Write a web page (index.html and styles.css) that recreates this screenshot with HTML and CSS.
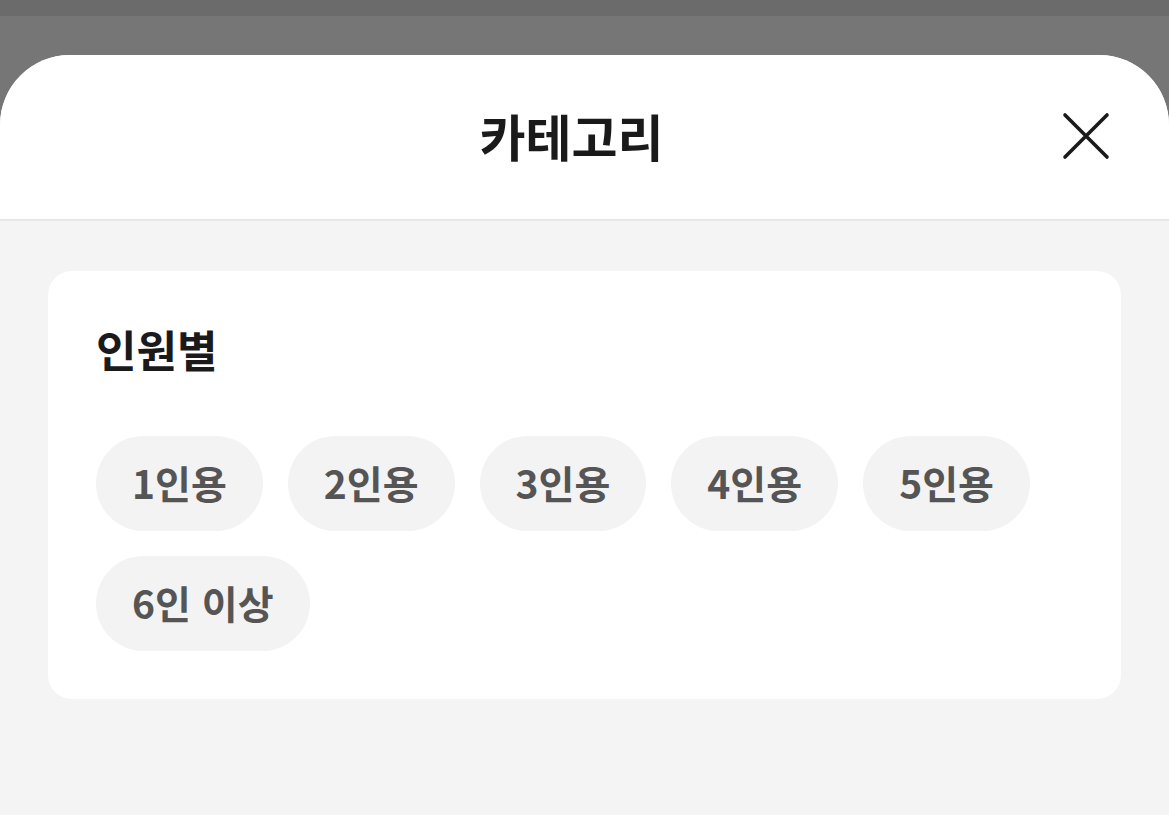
FILE: index.html
```html
<!DOCTYPE html>
<html lang="ko">
<head>
<meta charset="utf-8">
<link rel="stylesheet" href="styles.css">
</head>
<body>
<div class="status"></div>
<div class="backdrop">
  <div class="sheet">
    <header class="sheet-header">
      <h1 class="sheet-title">카테고리</h1>
      <button class="close-btn" aria-label="닫기">
        <svg width="50" height="50" viewBox="0 0 50 50"><path d="M4 4 L46 46 M46 4 L4 46" stroke="#1a1a1a" stroke-width="3.6" stroke-linecap="round" fill="none"/></svg>
      </button>
    </header>
    <main class="sheet-body">
      <section class="card">
        <h2 class="card-title">인원별</h2>
        <div class="chips">
          <span class="chip">1인용</span>
          <span class="chip">2인용</span>
          <span class="chip">3인용</span>
          <span class="chip">4인용</span>
          <span class="chip">5인용</span>
          <span class="chip">6인 이상</span>
        </div>
      </section>
    </main>
  </div>
</div>
</body>
</html>
```

FILE: styles.css
```css
* { box-sizing: border-box; }
html, body { margin: 0; padding: 0; }
body {
  width: 1169px;
  height: 815px;
  overflow: hidden;
  background: #767676;
  font-family: "Noto Sans CJK KR", "Noto Sans", sans-serif;
}
.status {
  height: 16px;
  background: #6b6b6b;
}
.backdrop {
  padding-top: 39px;
  background: #767676;
}
.sheet {
  background: #f4f4f4;
  border-radius: 70px 70px 0 0;
  overflow: hidden;
  height: 760px;
}
.sheet-header {
  position: relative;
  height: 166px;
  background: #fff;
  border-bottom: 2px solid #e6e6e6;
  display: flex;
  align-items: center;
  justify-content: center;
  padding-right: 26px;
}
.sheet-title {
  margin: 0;
  font-size: 50px;
  font-weight: 700;
  color: #1a1a1a;
  letter-spacing: 0;
  line-height: 1;
  padding-bottom: 5px;
}
.close-btn {
  position: absolute;
  right: 58px;
  top: 56px;
  width: 50px;
  height: 50px;
  padding: 0;
  border: 0;
  background: transparent;
  display: flex;
}
.sheet-body {
  padding: 50px 48px 0 48px;
}
.card {
  background: #fff;
  border-radius: 24px;
  padding: 52px 48px 48px;
}
.card-title {
  margin: 0 0 60px;
  font-size: 44px;
  font-weight: 700;
  color: #1a1a1a;
  line-height: 53px;
  letter-spacing: 0;
}
.chips {
  display: flex;
  flex-wrap: wrap;
  gap: 25px;
  width: 980px;
}
.chip {
  height: 95px;
  padding: 0 36px;
  border-radius: 48px;
  background: #f3f3f3;
  color: #555;
  font-size: 39px;
  font-weight: 700;
  display: flex;
  align-items: center;
  padding-bottom: 3px;
  letter-spacing: 0;
}
```
